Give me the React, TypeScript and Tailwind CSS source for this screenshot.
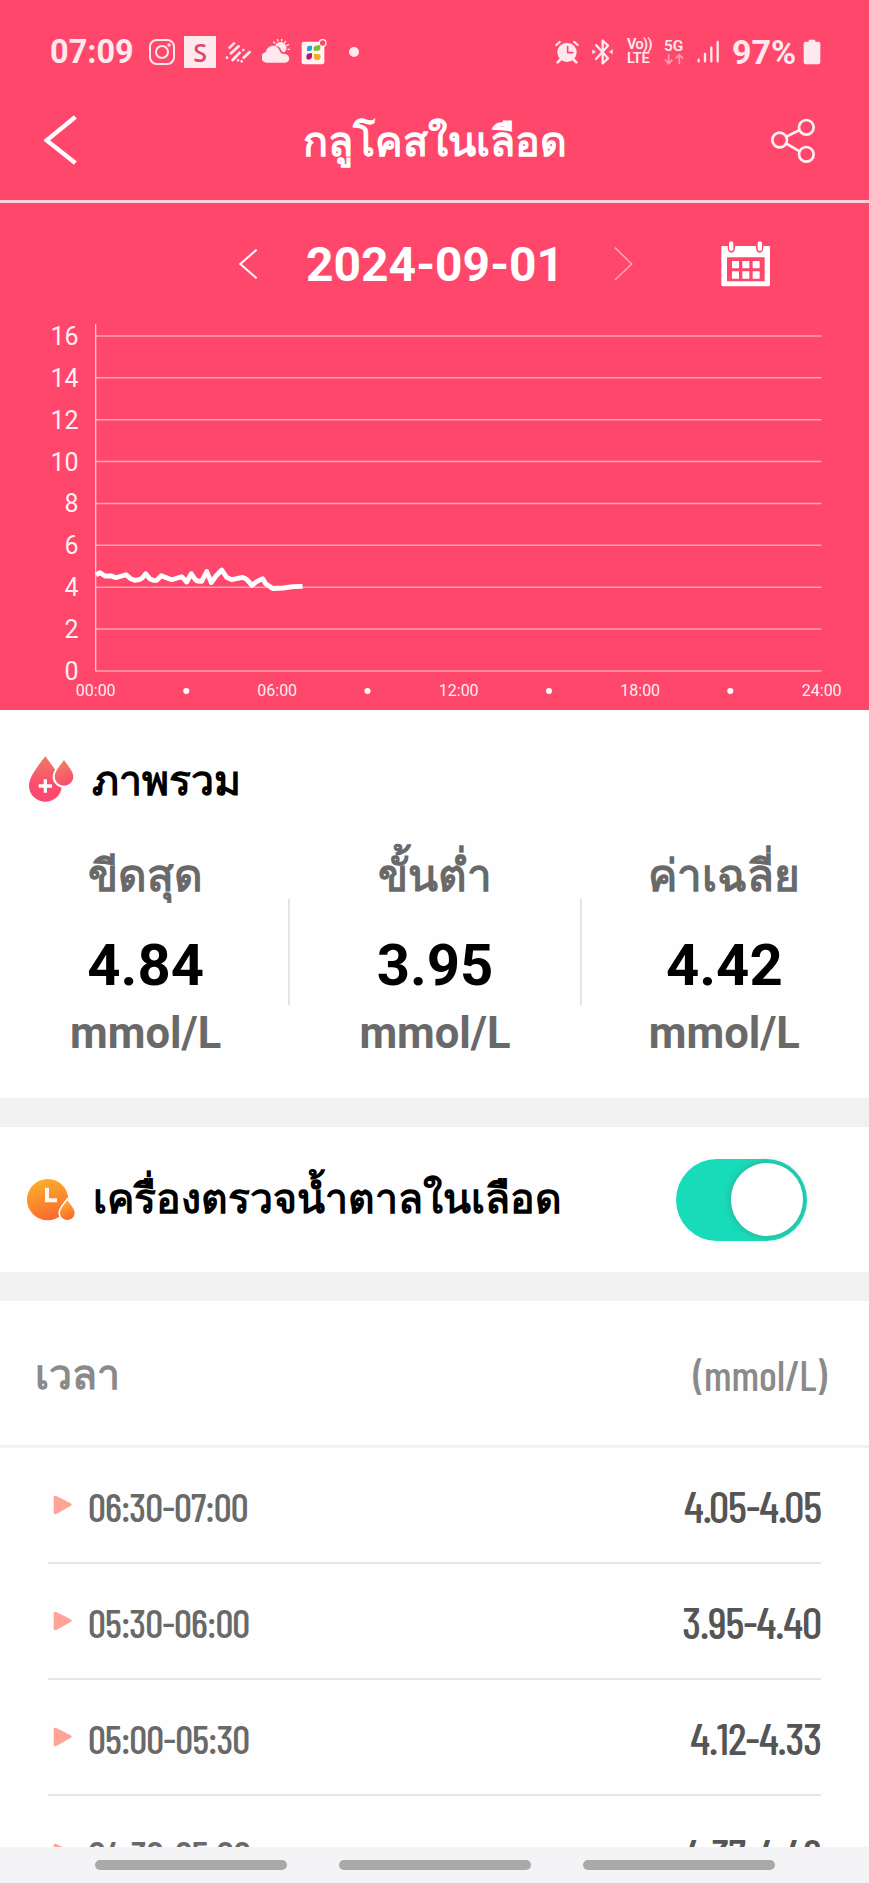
import React from "react";

const SANS = "font-[Roboto,'Noto_Sans',sans-serif]";
const THAI = "font-['Noto_Sans',sans-serif]";
const NARROW = "font-['Barlow_Condensed','Roboto_Condensed',Roboto,sans-serif]";

function StatusBar() {
  return (
    <div className="flex h-[104px] items-center pl-[50px] pr-[48px] text-[#ffe9ee]">
      <span className="w-[87px] whitespace-nowrap text-[32.5px] font-bold leading-none">07:09</span>
      <svg className="ml-[11px] h-7 w-7" viewBox="0 0 84 84" fill="none" stroke="currentColor" strokeWidth="6">
        <rect x="6" y="6" width="72" height="72" rx="20" />
        <circle cx="42" cy="42" r="18" />
        <circle cx="63" cy="21" r="5" fill="currentColor" stroke="none" />
      </svg>
      <span className="ml-2 flex h-8 w-8 items-center justify-center bg-[#ffe9ee] font-['Open_Sans',sans-serif] text-[25px] font-semibold leading-none text-[#d94a6c]">
        S
      </span>
      <svg className="ml-[9px] h-[22px] w-[26px]" viewBox="0 0 78 66" fill="none" stroke="currentColor" strokeWidth="8" strokeLinecap="round">
        <path d="M14 20L27 7M18 37L41 16M23 57L44 35M56 50L74 33M6 50h.1M55 27h.1M39 58h.1M50 61h.1" />
      </svg>
      <svg className="ml-[11px] h-[26px] w-7" viewBox="0 0 84 78" fill="currentColor">
        <path d="M16 71a15 15 0 0 1-4-32C14 20 40 12 51 31c4 11 7 14 17 14 19 2 17 26 1 26z" />
        <path d="M39 20a18 18 0 1 1 29 20c-7-1-10-3-12-10-3-6-8-9-17-10z" />
        <path d="M35 9l3 3M46 2l2 4M59 1v4M71 7l-3 4M79 17l-4 2M82 31h-4" stroke="currentColor" strokeWidth="4" strokeLinecap="round" />
      </svg>
      <svg className="ml-[11px] h-[26px] w-[26px]" viewBox="0 0 78 78">
        <rect x="2" y="8" width="68" height="68" rx="6" fill="#fff3f5" />
        <circle cx="65" cy="12" r="10" fill="#ff476c" stroke="#fff3f5" strokeWidth="4" />
        <path d="M18 36V26q0-6 8-6h7v9q0 7-8 7z" fill="#21a5d8" />
        <path d="M38 35V25q5-6 14-6h6v9q0 7-8 7z" fill="#79bf31" />
        <path d="M16 54q0-11 10-11h7v11q-2 8-10 8-7 0-7-8z" fill="#b5176d" />
        <path d="M39 45h11q9 0 9 9t-9 9h-7q-4-4-4-9z" fill="#f5ad19" />
      </svg>
      <span className="ml-[22px] h-2.5 w-2.5 rounded-full bg-[#ffe9ee]" />

      <div className="ml-auto flex items-center">
        <svg className="h-6 w-6" viewBox="0 0 72 72" fill="none" stroke="currentColor" strokeLinecap="round">
          <circle cx="36" cy="37" r="29" fill="currentColor" stroke="none" />
          <path d="M4 15L14 6M58 6l10 9" strokeWidth="7" />
          <path d="M15 60l-7 7M57 60l7 7" strokeWidth="8" />
          <path d="M38 20v18h15" stroke="#ff476c" strokeWidth="5" />
        </svg>
        <svg className="ml-3 h-[26px] w-[23px]" viewBox="0 0 69 78" fill="none" stroke="currentColor" strokeWidth="7" strokeLinecap="round" strokeLinejoin="round">
          <path d="M15 18l36 40-16 15V5l16 15-36 40" />
          <path d="M5 33v11l8-5zM64 33v11l-8-5z" fill="currentColor" strokeWidth="2" />
        </svg>
        <div className="ml-[13px] w-[26px] whitespace-nowrap text-[14.5px] font-semibold leading-[14px]">
          <div className="tracking-[-0.6px]">Vo))</div>
          <div className="tracking-[-0.3px]">LTE</div>
        </div>
        <div className="ml-[11px] flex w-[21px] flex-col text-[15.5px] font-semibold leading-[14px]">
          <span>5G</span>
          <svg className="h-3 w-5 opacity-50" viewBox="0 0 60 36" fill="none" stroke="currentColor" strokeWidth="5">
            <path d="M14 3v28M3 20l11 12 11-12M46 34V6M35 16L46 5l11 11" />
          </svg>
        </div>
        <svg className="ml-3 h-6 w-[23px]" viewBox="0 0 69 72" fill="none" stroke="currentColor" strokeWidth="7" strokeLinecap="round">
          <path d="M5 59v5M24 42v22M43 22v42M62 6v58" />
        </svg>
        <span className="ml-3 w-[68px] whitespace-nowrap text-[34px] font-bold leading-none">97%</span>
        <svg className="ml-[3px] h-[26px] w-[18px]" viewBox="0 0 54 78" fill="currentColor">
          <path d="M17 8V5q0-3 3-3h14q3 0 3 3v3h9q6 0 6 6v56q0 6-6 6H8q-6 0-6-6V14q0-6 6-6z" />
        </svg>
      </div>
    </div>
  );
}

function TitleBar() {
  return (
    <div className="flex h-[99px] items-center justify-between border-b-[3px] border-[#ffd3dc] pb-[24px] pl-11 pr-[53px]">
      <svg className="h-[50px] w-[34px]" viewBox="0 0 102 150" fill="none" stroke="#fff" strokeWidth="13">
        <path d="M94 6L8 76l86 68" />
      </svg>
      <h1 className={`${THAI} ml-[22px] whitespace-nowrap text-[41.3px] font-bold leading-[50px]`}>กลูโคสในเลือด</h1>
      <svg className="h-[46px] w-[46px]" viewBox="0 0 138 138" fill="none" stroke="#fff0f3" strokeWidth="8">
        <circle cx="29" cy="69" r="22" />
        <circle cx="109" cy="31" r="22" />
        <circle cx="109" cy="112" r="22" />
        <path d="M49 59l40-20M49 80l40 23" />
      </svg>
    </div>
  );
}

function DatePicker() {
  return (
    <div className="flex h-[107px] items-center pl-[238px] pr-[99px] pt-[15px]">
      <svg className="h-[30px] w-5" viewBox="0 0 60 90" fill="none" stroke="#fff" strokeWidth="6">
        <path d="M56 2L7 45l49 43" />
      </svg>
      <span className="ml-[48px] mt-[2px] w-[254px] whitespace-nowrap text-[48px] font-bold leading-none">2024-09-01</span>
      <svg className="ml-[54px] h-[34px] w-5" viewBox="0 0 60 102" fill="none" stroke="#ffa0b2" strokeWidth="5">
        <path d="M3 2l50 49L3 99" />
      </svg>
      <svg className="ml-auto h-[46px] w-[49px]" viewBox="0 0 147 138" fill="#fff">
        <path fillRule="evenodd" d="M4 15h16q-1 20 11 20t11-20h63q-1 20 11 20t11-20h16q4 0 4 4v113q0 4-4 4H5q-4 0-4-4V19q0-4 3-4zM18 49v72h113V49z" />
        <rect x="24" y="1" width="13" height="29" rx="6.5" />
        <rect x="110" y="1" width="13" height="29" rx="6.5" />
        <path d="M33 60h21v22H33zM64 60h21v22H64zM95 60h21v22H95zM33 91h21v22H33zM64 91h21v22H64zM95 91h21v22H95z" />
      </svg>
    </div>
  );
}

const TRACE =
  "96,575 100,572.7 105,576 111.7,576 115.7,577.7 126,574.7 130.7,578.7 135,580.3 140,579.3 142.3,578 145.7,573.7 150,579 153.3,580.3 156.7,580.3 161.3,575.7 171.7,579.7 181.7,576.7 186.7,582 191.3,573.7 195,579.3 197.3,581 201.7,581.3 206.7,571.5 211.3,582.5 216,576 221.7,570 226.7,577.3 231.7,579.7 242.7,577.3 246.7,579.3 252,585.3 256.7,581.7 262.7,578.7 265.7,583.7 272.7,588.5 283.3,588 293.3,586.7 302.5,586.3";

function GlucoseChart() {
  return (
    <svg className="block h-[400px] w-[869px]" viewBox="0 310 869 400" fill="#fff">
      {[0, 2, 4, 6, 8, 10, 12, 14, 16].map((v) => {
        const y = 671 - v * 20.94;
        return (
          <g key={v}>
            <path d={`M96 ${y}H821.5`} stroke="#fff" strokeOpacity="0.5" strokeWidth="1.5" />
            <text x="78.5" y={y + 9} textAnchor="end" fontSize="25" fillOpacity="0.93">
              {v}
            </text>
          </g>
        );
      })}
      <path d="M95.7 324V671.5" stroke="#fff" strokeOpacity="0.7" strokeWidth="1.3" />
      <polyline points={TRACE} fill="none" stroke="#fff" strokeWidth="4.8" strokeLinejoin="round" />
      {["00:00", "06:00", "12:00", "18:00", "24:00"].map((t, i) => (
        <text key={t} x={95.7 + i * 181.5} y="696" textAnchor="middle" fontSize="16" fillOpacity="0.93">
          {t}
        </text>
      ))}
      {[186.3, 367.5, 549, 730.3].map((x) => (
        <circle key={x} cx={x} cy="691" r="3" />
      ))}
    </svg>
  );
}

function DropsIcon() {
  return (
    <svg className="-mt-[3px] h-[46px] w-[46px]" viewBox="0 0 138 138">
      <defs>
        <linearGradient id="drop" x1="0" y1="0" x2="0" y2="1">
          <stop offset="0" stopColor="#ee7b66" />
          <stop offset="0.6" stopColor="#fb4d6c" />
          <stop offset="1" stopColor="#fc4770" />
        </linearGradient>
        <linearGradient id="drop-small" x1="0.3" y1="0" x2="0.6" y2="1">
          <stop offset="0" stopColor="#ef8068" />
          <stop offset="1" stopColor="#f94d6c" />
        </linearGradient>
      </defs>
      <path d="M52 1C35 24 3 60 3 89a49 48 0 0 0 98 0C101 60 68 24 52 1z" fill="url(#drop)" />
      <path d="M108 12C98 26 80 46 80 62a28 27 0 0 0 56 0C136 46 117 26 108 12z" fill="url(#drop-small)" stroke="#fff" strokeWidth="12" paintOrder="stroke" />
      <path d="M52 70v40M32 90h40" stroke="#fff" strokeWidth="10" />
    </svg>
  );
}

function ClockIcon() {
  return (
    <svg className="h-[42px] w-12" viewBox="0 0 144 126">
      <defs>
        <linearGradient id="clock" x1="0.3" y1="0" x2="0.6" y2="1">
          <stop offset="0" stopColor="#fbb02c" />
          <stop offset="1" stopColor="#fb682f" />
        </linearGradient>
      </defs>
      <circle cx="62" cy="62" r="62" fill="url(#clock)" />
      <path d="M60 26v38h30" fill="none" stroke="#fff6ec" strokeWidth="12" />
      <path d="M121 64c-8 12-22 26-22 38a22 21 0 0 0 44 0c0-12-14-26-22-38z" fill="url(#clock)" stroke="#fff" strokeWidth="10" paintOrder="stroke" />
    </svg>
  );
}

const STATS = [
  { label: "ขีดสุด", value: "4.84" },
  { label: "ขั้นต่ำ", value: "3.95" },
  { label: "ค่าเฉลี่ย", value: "4.42" },
];

function Overview() {
  return (
    <section className="h-[388px] pt-11">
      <div className="flex h-[52px] items-center pl-[28px]">
        <DropsIcon />
        <h2 className={`${THAI} ml-[18px] -mt-[2px] text-[41px] font-bold leading-[52px] text-black`}>ภาพรวม</h2>
      </div>
      <div className="relative grid grid-cols-3 pl-[1px] text-center">
        {STATS.map((s) => (
          <div key={s.label}>
            <div className={`${THAI} mt-[43px] text-[44px] font-bold leading-[50px] text-[#696969]`}>{s.label}</div>
            <div className="mt-[31px] h-[70px] text-[58px] font-bold leading-[70px] text-black">{s.value}</div>
            <div className="mt-[4px] h-[60px] text-[43.5px] font-bold leading-[60px] text-[#696969]">mmol/L</div>
          </div>
        ))}
        <span className="absolute left-[288px] top-[93px] h-[106px] w-[2px] bg-[#e4e4e4]" />
        <span className="absolute left-[580px] top-[93px] h-[106px] w-[2px] bg-[#e4e4e4]" />
      </div>
    </section>
  );
}

function Monitor() {
  return (
    <section className="flex h-[145px] items-center pl-[27px] pr-[62px]">
      <ClockIcon />
      <span className={`${THAI} -mt-[5px] ml-[18px] whitespace-nowrap text-[41px] font-bold leading-[52px] text-black`}>เครื่องตรวจน้ำตาลในเลือด</span>
      <span className="ml-auto flex h-[82px] w-[131px] shrink-0 items-center justify-end rounded-full bg-[#18dbb9] pr-[4px]">
        <span className="h-[73px] w-[72px] rounded-full bg-white shadow-[0_0_4px_3px_rgba(60,150,130,0.35)]" />
      </span>
    </section>
  );
}

const READINGS = [
  ["06:30-07:00", "4.05-4.05"],
  ["05:30-06:00", "3.95-4.40"],
  ["05:00-05:30", "4.12-4.33"],
  ["04:30-05:00", "4.37-4.49"],
];

function Readings() {
  return (
    <section className="h-[546px] overflow-hidden">
      <div className="flex h-[147px] items-center justify-between border-b-[3px] border-[#f1f1f1] pl-[35px] pr-[42px] text-[#8a8a8a]">
        <span className={`${THAI} text-[41px] font-bold leading-[52px]`}>เวลา</span>
        <span className={`${NARROW} mt-[2px] text-[42px] font-medium leading-[52px]`}>(mmol/L)</span>
      </div>
      {READINGS.map(([time, value]) => (
        <div key={time} className="ml-12 mr-12 flex h-[116px] items-center border-b-2 border-[#e6e6e6] pl-[5px]">
          <svg className="h-5 w-5" viewBox="0 0 60 60" fill="#ffa496">
            <path d="M2 8q0-8 8-5l43 22q6 4 0 8L10 57q-8 3-8-5z" />
          </svg>
          <span className={`${NARROW} ml-[15px] mt-[2px] whitespace-nowrap text-[40px] font-medium leading-[52px] tracking-[-0.9px] text-[#696969]`}>{time}</span>
          <span className={`${NARROW} ml-auto whitespace-nowrap text-[45px] font-medium leading-[52px] tracking-[-1.1px] text-[#555]`}>{value}</span>
        </div>
      ))}
    </section>
  );
}

export default function App() {
  return (
    <div className={`${SANS} h-[1883px] w-[869px] overflow-hidden bg-[#fefefe]`}>
      <header className="h-[710px] bg-[#ff476c] text-white">
        <StatusBar />
        <TitleBar />
        <DatePicker />
        <GlucoseChart />
      </header>
      <Overview />
      <div className="h-[29px] bg-[#f1f1f1]" />
      <Monitor />
      <div className="h-[29px] bg-[#f1f1f1]" />
      <Readings />
      <nav className="flex h-9 justify-center gap-[52px] bg-[#f4f4f6] pt-[13px]">
        <span className="h-2.5 w-48 rounded-full bg-[#a9a9a9]" />
        <span className="h-2.5 w-48 rounded-full bg-[#a9a9a9]" />
        <span className="h-2.5 w-48 rounded-full bg-[#a9a9a9]" />
      </nav>
    </div>
  );
}
